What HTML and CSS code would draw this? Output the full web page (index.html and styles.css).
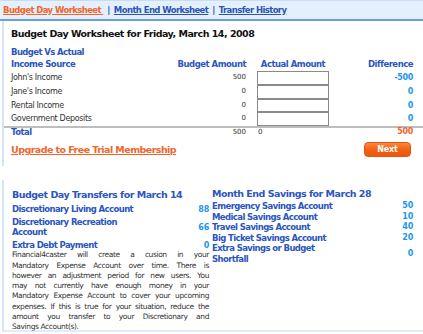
FILE: index.html
```html
<!DOCTYPE html>
<html>
<head>
<meta charset="utf-8">
<link rel="stylesheet" href="styles.css">
</head>
<body>
<nav class="tabs">
  <a class="tab active" href="#">Budget Day Worksheet </a><span class="sep">|</span>
  <a class="tab" href="#">Month End Worksheet</a><span class="sep">|</span>
  <a class="tab" href="#">Transfer History</a>
</nav>

<section class="panel top">
  <h1 class="title">Budget Day Worksheet for Friday, March 14, 2008</h1>
  <h2 class="sub">Budget Vs Actual</h2>
  <div class="grid">
    <div class="hd">Income Source</div>
    <div class="hd num">Budget Amount</div>
    <div class="hd center">Actual Amount</div>
    <div class="hd num">Difference</div>

    <div class="lbl">John's Income</div><div class="num small">500</div><div class="box"></div><div class="num diff">-500</div>
    <div class="lbl">Jane's Income</div><div class="num small">0</div><div class="box"></div><div class="num diff">0</div>
    <div class="lbl">Rental Income</div><div class="num small">0</div><div class="box"></div><div class="num diff">0</div>
    <div class="lbl">Government Deposits</div><div class="num small">0</div><div class="box"></div><div class="num diff">0</div>
  </div>
  <div class="grid total">
    <div class="hd">Total</div>
    <div class="num small">500</div>
    <div class="small act">0</div>
    <div class="num diff orange">500</div>
  </div>
  <div class="actions">
    <a class="upgrade" href="#">Upgrade to Free Trial Membership</a>
    <button class="next">Next</button>
  </div>
</section>

<section class="panel bottom">
  <div class="col left">
    <h2 class="coltitle">Budget Day Transfers for March 14</h2>
    <div class="item"><span>Discretionary Living Account</span><span class="val">88</span></div>
    <div class="item"><span>Discretionary Recreation<br>Account</span><span class="val">66</span></div>
    <div class="item"><span>Extra Debt Payment</span><span class="val">0</span></div>
    <p class="note">
      <span class="ln">Financial4caster will create a cusion in your</span>
      <span class="ln">Mandatory Expense Account over time. There is</span>
      <span class="ln">however an adjustment period for new users. You</span>
      <span class="ln">may not currently have enough money in your</span>
      <span class="ln">Mandatory Expense Account to cover your upcoming</span>
      <span class="ln">expenses. If this is true for your situation, reduce the</span>
      <span class="ln">amount you transfer to your Discretionary and</span>
      <span class="ln last">Savings Account(s).</span>
    </p>
  </div>
  <div class="col right">
    <h2 class="coltitle">Month End Savings for March 28</h2>
    <div class="item"><span>Emergency Savings Account</span><span class="val">50</span></div>
    <div class="item"><span>Medical Savings Account</span><span class="val">10</span></div>
    <div class="item"><span>Travel Savings Account</span><span class="val">40</span></div>
    <div class="item"><span>Big Ticket Savings Account</span><span class="val">20</span></div>
    <div class="item"><span>Extra Savings or Budget<br>Shortfall</span><span class="val">0</span></div>
  </div>
</section>
</body>
</html>
```

FILE: styles.css
```css
* { box-sizing: border-box; }
body {
  margin: 0;
  width: 423px;
  height: 334px;
  background: #fff;
  font-family: "DejaVu Sans", Verdana, sans-serif;
  color: #333;
}
.tabs {
  height: 21px;
  background: #e4f0fd;
  border-top: 1px solid #c9def6;
  border-bottom: 2px solid #6f9de2;
  padding: 0 0 1px 3px;
  font-size: 8.5px;
  letter-spacing: -0.6px;
  font-weight: bold;
  display: flex;
  align-items: center;
  gap: 4px;
  white-space: pre;
}
.tab { color: #2b55b5; text-decoration: underline; }
.tab.active { color: #f2652a; }
.sep { color: #2b55b5; font-weight: bold; }

.panel {
  margin-left: 2px;
  border-left: 2px solid #d3e4f8;
}
.top { padding: 7px 10px 0 7px; height: 145px; }
.title {
  margin: 0;
  font-size: 9.5px;
  letter-spacing: -0.5px;
  color: #111;
  line-height: 12px;
}
.sub {
  margin: 7px 0 0;
  font-size: 8.5px;
  letter-spacing: -0.6px;
  color: #2b55c0;
  line-height: 11px;
}
.grid {
  display: grid;
  grid-template-columns: 1fr 75px 11px 72px 84px;
  font-size: 8px;
  white-space: nowrap;
}
.grid > :nth-child(4n+2) { grid-column: 2; }
.grid > :nth-child(4n+3) { grid-column: 4; }
.grid > :nth-child(4n+4) { grid-column: 5; }
.hd {
  font-weight: bold;
  font-size: 8.5px;
  letter-spacing: -0.5px;
  color: #2b55c0;
  line-height: 13px;
}
.num { text-align: right; }
.center { text-align: center; }
.lbl, .small, .diff { line-height: 13.75px; }
.lbl { color: #333; letter-spacing: -0.35px; }
.small { font-size: 7px; color: #333; }
.diff { color: #2196ee; font-weight: bold; font-size: 8px; letter-spacing: -0.3px; }
.box {
  height: 13.75px;
  border: 1px solid #8a8a8a;
  background: #fff;
}
.total {
  margin: 0 -10px 0 -7px;
  padding: 0 10px 0 7px;
  border-top: 2px solid #bdbdbd;
}
.total .hd, .total > div { line-height: 8px; }
.act { padding-left: 1px; }
.orange { color: #f2652a; }
.actions {
  display: flex;
  justify-content: space-between;
  align-items: center;
  margin-top: 6px;
}
.upgrade {
  color: #f2652a;
  font-weight: bold;
  font-size: 9.5px;
  letter-spacing: -0.55px;
  text-decoration: underline;
}
.next {
  width: 47px;
  height: 15px;
  padding: 0;
  margin-right: 2px;
  border: 1px solid #e0560f;
  border-radius: 4px;
  background: linear-gradient(#fb8a3c, #f25f12 55%, #ee570c);
  color: #fff;
  font-family: inherit;
  font-weight: bold;
  font-size: 8px;
  letter-spacing: -0.2px;
  line-height: 13px;
}

.bottom {
  margin-top: 14px;
  height: 152px;
  border-bottom: 2px solid #e1ecfa;
  padding: 7px 10px 0 8px;
  display: grid;
  grid-template-columns: 197px 201px;
  gap: 3px;
  align-items: start;
}
.coltitle {
  margin: 0;
  font-size: 9.5px;
  letter-spacing: -0.5px;
  line-height: 14px;
  color: #2b55c0;
  white-space: nowrap;
}
.item {
  display: flex;
  justify-content: space-between;
  align-items: center;
  font-size: 8.5px;
  letter-spacing: -0.6px;
  font-weight: bold;
  color: #2b55c0;
  line-height: 10.6px;
}
.left .coltitle { margin-top: 1px; }
.left .item { margin-top: 3.3px; line-height: 9.6px; }
.val { color: #2196ee; font-size: 8px; letter-spacing: -0.2px; }
.note {
  margin: 0;
  font-size: 7.5px;
  letter-spacing: -0.4px;
  line-height: 10.3px;
  color: #333;
  font-weight: normal;
}
.ln {
  display: block;
  white-space: nowrap;
  text-align: justify;
  text-align-last: justify;
}
.ln.last { text-align-last: left; }
```
